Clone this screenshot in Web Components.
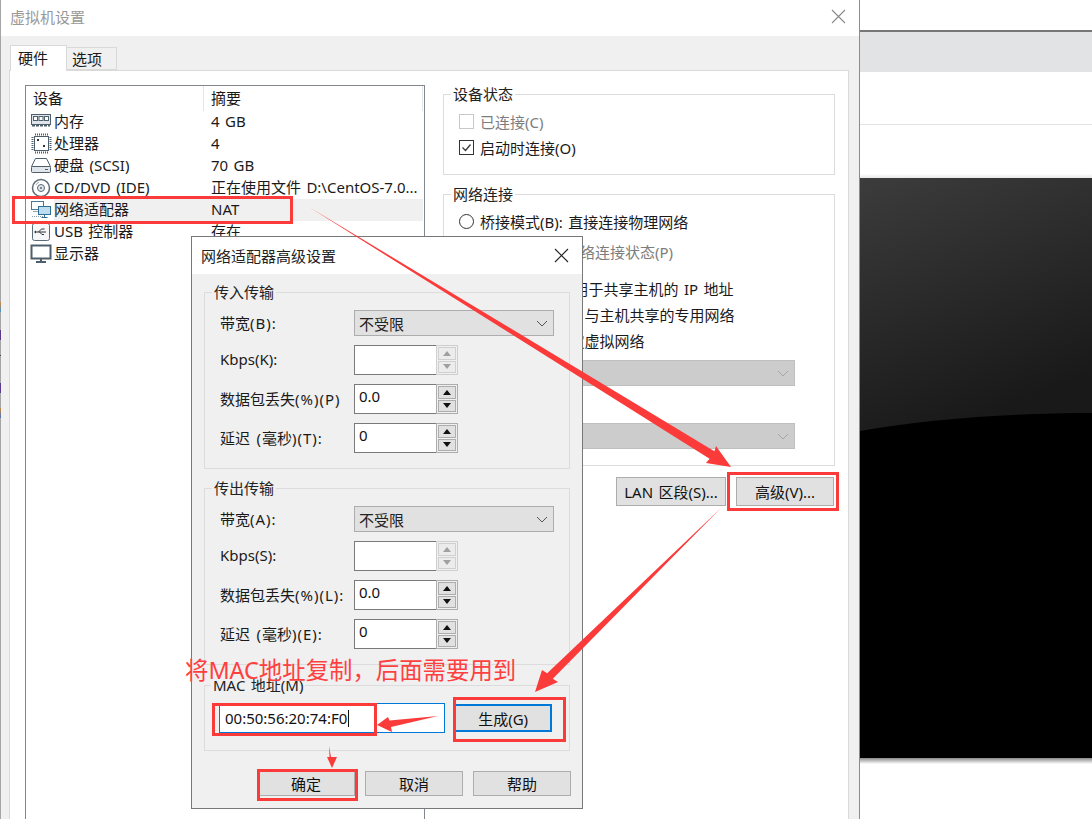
<!DOCTYPE html>
<html lang="zh-CN">
<head>
<meta charset="utf-8">
<title>虚拟机设置</title>
<style>
    html, body {
        margin: 0;
        height: 100%;
        overflow: hidden;
        background: #fff;
        font-family: "Noto Sans", "Noto Sans CJK SC", sans-serif;
        font-size: 15px;
        word-spacing: 1.5px;
        color: #1a1a1a;
    }
    .desktop {
        position: relative;
        width: 1092px;
        height: 819px;
        display: flex;
        overflow: hidden;
    }
</style>
</head>
<body>

<div class="desktop">
    <vm-settings></vm-settings>
    <app-pane></app-pane>
    <net-dialog></net-dialog>
    <note-layer></note-layer>
</div>

<script>
const ICONS = {
    memory: `<rect x="1.500" y="3.500" width="19" height="10" fill="#dfe5ea" stroke="#4e5e6b"/><rect x="3.500" y="5.500" width="4" height="4" fill="#fff" stroke="#4e5e6b"/><rect x="9" y="5.500" width="4" height="4" fill="#fff" stroke="#4e5e6b"/><rect x="14.500" y="5.500" width="4" height="4" fill="#fff" stroke="#4e5e6b"/><path d="M2 14.500h18" stroke="#4e5e6b" stroke-width="2" stroke-dasharray="3 1"/>`,
    cpu: `<rect x="4.500" y="3.500" width="14" height="14" fill="#fff" stroke="#4e5e6b"/><path d="M5 1.500h13M5 19.500h13M2.500 4v13M20.500 4v13" stroke="#4e5e6b" stroke-width="2" stroke-dasharray="1 1"/><rect x="7" y="6" width="2" height="2" fill="#333"/><rect x="13" y="12" width="2" height="2" fill="#333"/>`,
    disk: `<path d="M5.500 3.500h11l4 8h-19z" fill="#fff" stroke="#4e5e6b"/><rect x="1.500" y="11.500" width="19" height="6" rx="1" fill="#dfe5ea" stroke="#4e5e6b"/><path d="M15 14.500h3" stroke="#4e5e6b"/>`,
    cd: `<circle cx="11" cy="11" r="8.500" fill="#fff" stroke="#5a6a76" stroke-width="1.500"/><circle cx="11" cy="11" r="3.500" fill="#dfe5ea" stroke="#5a6a76"/><circle cx="11" cy="11" r="1" fill="#5a6a76"/><path d="M6 8a6 6 0 0 1 3-3" fill="none" stroke="#9aa7b1"/>`,
    net: `<rect x="1.500" y="2.500" width="12" height="8" fill="#fff" stroke="#4e7892"/><path d="M3 12.500h8" stroke="#9aa7b1"/><path d="M2 17.500h12" stroke="#8aa0b0" stroke-dasharray="1 1"/><rect x="8.500" y="7.500" width="12" height="8" fill="#bcdcf0" stroke="#2f6f96"/><path d="M14.500 16v2M11.500 18.500h6" stroke="#2f6f96"/>`,
    usb: `<rect x="2.500" y="2.500" width="17" height="17" rx="2" fill="#f5f7f8" stroke="#5a6a76"/><path d="M6 11h10M8.500 11l3-3h3M9.500 11l2.500 2.500h2" fill="none" stroke="#333"/><path d="M6 9.500v3l-2-1.500z" fill="#333"/>`,
    display: `<rect x="1.500" y="2.500" width="19" height="13" fill="#fff" stroke="#4e5e6b" stroke-width="2"/><path d="M11 16v2M6 19h10" stroke="#4e5e6b" stroke-width="2"/>`
};

const CHEVRON = color => `<svg width="12" height="7" viewBox="0 0 12 7"><path d="M1 1l5 5 5-5" fill="none" stroke="${color}"/></svg>`;
const CROSS = color => `<svg width="15" height="15" viewBox="0 0 15 15"><path d="M1 1l13 13M14 1L1 14" fill="none" stroke="${color}" stroke-width="1.100"/></svg>`;

class HwRow extends HTMLElement {
    connectedCallback() {
        const sel = this.hasAttribute('selected');
        this.attachShadow({mode: 'open'}).innerHTML = `
<style>
    :host { display: block; height: 22px; }
    .row { display: grid; grid-template-columns: 185px 1fr; height: 22px; align-items: center; position: relative; }
    .name { display: flex; align-items: center; padding-left: 4px; gap: 2px; white-space: nowrap; }
    .name svg { flex: none; }
    .name span { height: 22px; line-height: 21px; flex: 1; }
    .sum { line-height: 21px; height: 22px; white-space: nowrap; }
    .sel .name span, .sel .sum { background: #f0f0f0; }
    .sel .sum { margin-right: 1px; }
</style>
<div class="row ${sel ? 'sel' : ''}">
    <div class="name"><svg width="22" height="22" viewBox="0 0 22 22">${ICONS[this.getAttribute('icon')]}</svg><span>${this.getAttribute('name')}</span></div>
    <div class="sum">${this.getAttribute('sum') || ''}</div>
</div>`;
    }
}
customElements.define('hw-row', HwRow);

class GroupBox extends HTMLElement {
    connectedCallback() {
        this.attachShadow({mode: 'open'}).innerHTML = `
<style>
    :host { display: block; }
    fieldset { margin: 0; padding: var(--pad, 8px 15px 15px); border: 1px solid #dcdcdc; min-width: 0; }
    legend { padding: 0 2px; margin-left: -8px; line-height: 20px; height: 20px; color: #222; }
</style>
<fieldset>
    <legend>${this.getAttribute('label')}</legend>
    <slot></slot>
</fieldset>`;
    }
}
customElements.define('group-box', GroupBox);

class WinButton extends HTMLElement {
    connectedCallback() {
        this.attachShadow({mode: 'open'}).innerHTML = `
<style>
    :host { display: block; width: var(--w, 98px); height: var(--h, 25px); }
    div {
        box-sizing: border-box; height: 100%;
        background: #e1e1e1; border: var(--bd, 1px solid #adadad);
        display: flex; align-items: center; justify-content: center;
        white-space: nowrap; color: #111;
    }
</style>
<div><slot></slot></div>`;
    }
}
customElements.define('win-button', WinButton);

class ComboBox extends HTMLElement {
    connectedCallback() {
        const off = this.hasAttribute('disabled');
        this.attachShadow({mode: 'open'}).innerHTML = `
<style>
    :host { display: block; height: 26px; }
    div {
        box-sizing: border-box; height: 100%;
        display: flex; align-items: center; justify-content: space-between;
        padding: 0 5px 0 4px;
        background: ${off ? '#cccccc' : '#e1e1e1'};
        border: 1px solid ${off ? '#bfbfbf' : '#adadad'};
        color: #222;
    }
</style>
<div><span><slot></slot></span>${CHEVRON(off ? '#a5a5a5' : '#555')}</div>`;
    }
}
customElements.define('combo-box', ComboBox);

class SpinField extends HTMLElement {
    connectedCallback() {
        const off = this.hasAttribute('disabled');
        const tone = off ? '#a0a0a0' : '#111';
        this.attachShadow({mode: 'open'}).innerHTML = `
<style>
    :host { display: block; width: 104px; height: 30px; }
    .wrap { display: flex; height: 30px; }
    .field {
        box-sizing: border-box; width: 82px; height: 30px;
        background: #fff; border: 1px solid #7a7a7a; border-right: 0;
        padding: 0 0 0 4px; line-height: 23px; color: #111;
    }
    .btns {
        box-sizing: border-box; width: 22px; height: 30px;
        border: 1px solid ${off ? '#cfcfcf' : '#adadad'};
        display: grid; grid-template-rows: 1fr 1fr; gap: 1px; padding: 1px;
        background: #f0f0f0;
    }
    .btns span {
        display: flex; align-items: center; justify-content: center;
        background: ${off ? '#ececec' : '#e1e1e1'};
        border: 1px solid ${off ? '#d0d0d0' : '#adadad'};
    }
    i { width: 0; height: 0; border: 4px solid transparent; border-left-width: 4.5px; border-right-width: 4.5px; }
    .up { border-top: 0; border-bottom: 5px solid ${tone}; }
    .down { border-bottom: 0; border-top: 5px solid ${tone}; }
</style>
<div class="wrap">
    <div class="field">${this.getAttribute('value') || ''}</div>
    <div class="btns"><span><i class="up"></i></span><span><i class="down"></i></span></div>
</div>`;
    }
}
customElements.define('spin-field', SpinField);

class TransferGroup extends HTMLElement {
    connectedCallback() {
        const keys = this.getAttribute('keys').split(',');
        this.attachShadow({mode: 'open'}).innerHTML = `
<style>
    :host { display: block; }
    .grid { display: grid; grid-template-columns: 134px auto; justify-content: start; row-gap: 9px; align-items: center; }
    .wide { width: 200px; }
    label { white-space: nowrap; color: #1a1a1a; padding-bottom: 2px; }
    b { font-weight: 400; letter-spacing: 1px; }
</style>
<group-box label="${this.getAttribute('label')}">
    <div class="grid">
        <label>带宽<b>(${keys[0]}):</b></label><combo-box class="wide">不受限</combo-box>
        <label>Kbps(${keys[1]}):</label><spin-field disabled></spin-field>
        <label>数据包丢失<b>(%)(${keys[2]})${keys[2] === 'L' ? ':' : ''}</b></label><spin-field value="0.0"></spin-field>
        <label>延迟<b> (</b>毫秒<b>)(${keys[3]}):</b></label><spin-field value="0"></spin-field>
    </div>
</group-box>`;
    }
}
customElements.define('transfer-group', TransferGroup);

class NetDialog extends HTMLElement {
    connectedCallback() {
        this.attachShadow({mode: 'open'}).innerHTML = `
<style>
    :host {
        position: absolute; left: 191px; top: 236px;
        width: 392px; height: 573px; box-sizing: border-box;
        border: 1px solid #787878; background: #f0f0f0;
        display: flex; flex-direction: column;
    }
    .title {
        height: 37px; flex: none; background: #fff;
        display: flex; align-items: center; justify-content: space-between;
        padding: 0 13px 0 9px; color: #222;
    }
    .title svg { display: block; }
    .body { flex: 1; padding: 8px 12px 0; display: flex; flex-direction: column; }
    .g2 { margin-top: 9px; }
    .g3 { margin-top: 10px; --pad: 8px 17px 17px 14px; }
    .mac { display: flex; align-items: center; gap: 9px; }
    .input {
        box-sizing: border-box; width: 227px; height: 30px;
        background: #fff; border: 1px solid #0078d7;
        display: flex; align-items: center; padding-left: 5px; color: #111;
    }
    .caret { width: 1px; height: 17px; background: #111; margin-left: 1px; }
    .gen { --w: 98px; --h: 28px; --bd: 2px solid #0078d7; }
    .actions { display: flex; justify-content: flex-end; gap: 10px; margin: 20px -1px 0 0; }
</style>
<div class="title"><span>网络适配器高级设置</span>${CROSS('#222')}</div>
<div class="body">
    <transfer-group label="传入传输" keys="B,K,P,T"></transfer-group>
    <transfer-group class="g2" label="传出传输" keys="A,S,L,E"></transfer-group>
    <group-box class="g3" label="MAC 地址(M)">
        <div class="mac">
            <div class="input"><span>00:50:56:20:74:F0</span><span class="caret"></span></div>
            <win-button class="gen">生成(G)</win-button>
        </div>
    </group-box>
    <div class="actions">
        <win-button>确定</win-button>
        <win-button>取消</win-button>
        <win-button>帮助</win-button>
    </div>
</div>`;
    }
}
customElements.define('net-dialog', NetDialog);

class VmSettings extends HTMLElement {
    connectedCallback() {
        this.attachShadow({mode: 'open'}).innerHTML = `
<style>
    :host {
        display: flex; flex-direction: column; flex: none; position: relative;
        width: 860px; height: 819px; box-sizing: border-box;
        background: #f0f0f0;
        border-left: 1px solid #a5a5a5; border-right: 1px solid #8c8c8c;
    }
    .fringe {
        position: absolute; left: -1px; top: 300px; width: 1px; height: 120px;
        background: linear-gradient(transparent 2px, #c98a3a 2px, #4a90c8 12px, transparent 12px,
            transparent 30px, #5a3a8a 30px, #5a3a8a 40px, transparent 40px,
            transparent 55px, #444 55px, #444 56px, transparent 56px,
            transparent 83px, #5a3a8a 83px, #5a3a8a 93px, transparent 93px,
            transparent 108px, #c98a3a 108px, #4a70b8 118px, transparent 118px);
    }
    .title {
        height: 36px; flex: none; box-sizing: border-box; background: #fff; color: #999;
        display: flex; align-items: center; justify-content: space-between;
        padding: 0 13px 3px 9px;
    }
    .tabs { height: 34px; flex: none; display: flex; align-items: flex-end; padding-left: 9px; position: relative; z-index: 1; }
    .tab { box-sizing: border-box; border: 1px solid #d9d9d9; display: flex; align-items: center; }
    .on { width: 57px; height: 26px; margin-bottom: -1px; background: #fff; border-bottom: 0; padding: 0 0 3px 7px; }
    .off { width: 50px; height: 23px; background: #f0f0f0; border-left: 0; padding: 0 0 1px 5px; }
    .panel {
        flex: 1; min-height: 0; margin: 0 10px 0 8px;
        background: #fff; border: 1px solid #d9d9d9; border-bottom: 0;
        padding: 14px 14px 0 15px;
        display: flex; gap: 18px;
    }
    .tree {
        box-sizing: border-box; width: 400px; flex: none;
        border: 1px solid #828790; border-bottom: 0; background: #fff;
    }
    .head { display: grid; grid-template-columns: 177px 1fr; height: 25px; line-height: 24px; }
    .head span:first-child { padding-left: 7px; }
    .head span:last-child { padding-left: 7px; border-left: 1px solid #e5e5e5; height: 25px; border-right: 1px solid #e5e5e5; margin-right: 1px; }
    .side { flex: 1; min-width: 0; display: flex; flex-direction: column; }
    group-box { width: 392px; }
    .side .g1 { margin-top: -1px; --pad: 4px 15px 14px; }
    .side .g2 { margin-top: 9px; --pad: 4px 15px 16px; }
    .line { display: flex; align-items: center; gap: 6px; height: 26px; white-space: nowrap; color: #1a1a1a; }
    .dim { color: #7d7d7d; }
    .box { width: 13px; height: 13px; border: 1px solid #333; background: #fff; display: block; flex: none; }
    .dim .box { border-color: #c8c8c8; }
    .box svg { display: block; }
    .radio { width: 13px; height: 13px; border: 1px solid #333; border-radius: 50%; background: #fff; flex: none; }
    .sub { margin: 4px 0 0 25px; }
    .after { margin-top: 11px; }
    .combo { width: 320px; margin: 7px 0 0 16px; }
    .lan { height: 20px; margin: 15px 0 0 16px; }
    .combo2 { margin-top: 2px; }
    .actions { display: flex; justify-content: flex-end; gap: 10px; margin-top: 11px; width: 391px; }
    .lanb { --w: 110px; --h: 29px; }
    .adv { --w: 98px; --h: 29px; }
</style>
<div class="fringe"></div>
<div class="title"><span>虚拟机设置</span>${CROSS('#8a8a8a')}</div>
<div class="tabs"><div class="tab on">硬件</div><div class="tab off">选项</div></div>
<div class="panel">
    <div class="tree">
        <div class="head"><span>设备</span><span>摘要</span></div>
        <hw-row icon="memory" name="内存" sum="4 GB"></hw-row>
        <hw-row icon="cpu" name="处理器" sum="4"></hw-row>
        <hw-row icon="disk" name="硬盘 (SCSI)" sum="70 GB"></hw-row>
        <hw-row icon="cd" name="CD/DVD (IDE)" sum="正在使用文件 D:\\CentOS-7.0..."></hw-row>
        <hw-row icon="net" name="网络适配器" sum="NAT" selected></hw-row>
        <hw-row icon="usb" name="USB 控制器" sum="存在"></hw-row>
        <hw-row icon="display" name="显示器"></hw-row>
    </div>
    <div class="side">
        <group-box class="g1" label="设备状态">
            <div class="line dim"><span class="box"></span>已连接(C)</div>
            <div class="line"><span class="box"><svg width="13" height="13" viewBox="0 0 13 13"><path d="M2.500 6.500l3 3 5-6" fill="none" stroke="#333" stroke-width="1.200"/></svg></span>启动时连接(O)</div>
        </group-box>
        <group-box class="g2" label="网络连接">
            <div class="line"><span class="radio"></span>桥接模式(B): 直接连接物理网络</div>
            <div class="line dim sub"><span class="box"></span>复制物理网络连接状态(P)</div>
            <div class="line after"><span class="radio"></span>NAT 模式(N): 用于共享主机的 IP 地址</div>
            <div class="line"><span class="radio"></span>仅主机模式(H): 与主机共享的专用网络</div>
            <div class="line"><span class="radio"></span>自定义(U): 特定虚拟网络</div>
            <combo-box class="combo" disabled></combo-box>
            <div class="line lan">LAN 区段(L):</div>
            <combo-box class="combo combo2" disabled></combo-box>
        </group-box>
        <div class="actions">
            <win-button class="lanb">LAN 区段(S)...</win-button>
            <win-button class="adv">高级(V)...</win-button>
        </div>
    </div>
</div>`;
    }
}
customElements.define('vm-settings', VmSettings);

class AppPane extends HTMLElement {
    connectedCallback() {
        this.attachShadow({mode: 'open'}).innerHTML = `
<style>
    :host { display: flex; flex-direction: column; flex: 1; min-width: 0; height: 819px; background: #fff; }
    .top { height: 30px; flex: none; border-bottom: 2px solid #777; }
    .band { height: 40px; flex: none; background: #e2e3e5; }
    .rowa { height: 52px; flex: none; border-bottom: 1px solid #e3e3e3; }
    .rowb { height: 53px; flex: none; background: linear-gradient(#fff 92%, #e8e8e8); }
    .screen { height: 580px; flex: none; display: block; width: 100%; }
    .shade { height: 6px; flex: none; background: linear-gradient(#8a8a8a, #fff); }
</style>
<div class="top"></div>
<div class="band"></div>
<div class="rowa"></div>
<div class="rowb"></div>
<svg class="screen" viewBox="0 0 232 580" preserveAspectRatio="none">
    <defs><linearGradient id="sky" x1="0" y1="0" x2="0.35" y2="1">
        <stop offset="0" stop-color="#3c3c3c"/><stop offset="1" stop-color="#191919"/>
    </linearGradient></defs>
    <rect width="232" height="580" fill="#000"/>
    <path d="M0 0H232V235C160 235 70 240 0 253Z" fill="url(#sky)"/>
</svg>
<div class="shade"></div>`;
    }
}
customElements.define('app-pane', AppPane);

class NoteLayer extends HTMLElement {
    connectedCallback() {
        const boxes = [[13.5, 197.5, 278, 25], [728.5, 473.5, 109, 36], [454.5, 698.5, 110, 42], [213.5, 704.5, 162, 30], [258.5, 770.5, 98, 29]];
        const arrows = [
            '309,207 714.4,451.2 716,446 731,467 706,463 709.6,458.8',
            '721,508 552.8,678.8 558,682 535,692 542,670 547.2,673.2',
            '438,716 391,727 392,732 377,725 388,717 389.5,720.5',
            '329,746 331,757 337,757 332,768 327,757 329.5,757'
        ];
        this.attachShadow({mode: 'open'}).innerHTML = `
<style>
    :host { position: absolute; inset: 0; display: block; pointer-events: none; }
    svg { position: absolute; left: 0; top: 0; }
    .tip {
        position: absolute; left: 185px; top: 658px;
        font-size: 23.4px; line-height: 24px; color: #ff4040; white-space: nowrap; word-spacing: 0;
    }
</style>
<svg width="1092" height="819" viewBox="0 0 1092 819">
    ${boxes.map(b => `<rect x="${b[0]}" y="${b[1]}" width="${b[2]}" height="${b[3]}" fill="none" stroke="#fb3a3a" stroke-width="3"/>`).join('')}
    ${arrows.map(a => `<polygon points="${a}" fill="#fb3a3a"/>`).join('')}
</svg>
<div class="tip">将MAC地址复制，后面需要用到</div>`;
    }
}
customElements.define('note-layer', NoteLayer);
</script>
</body>
</html>
